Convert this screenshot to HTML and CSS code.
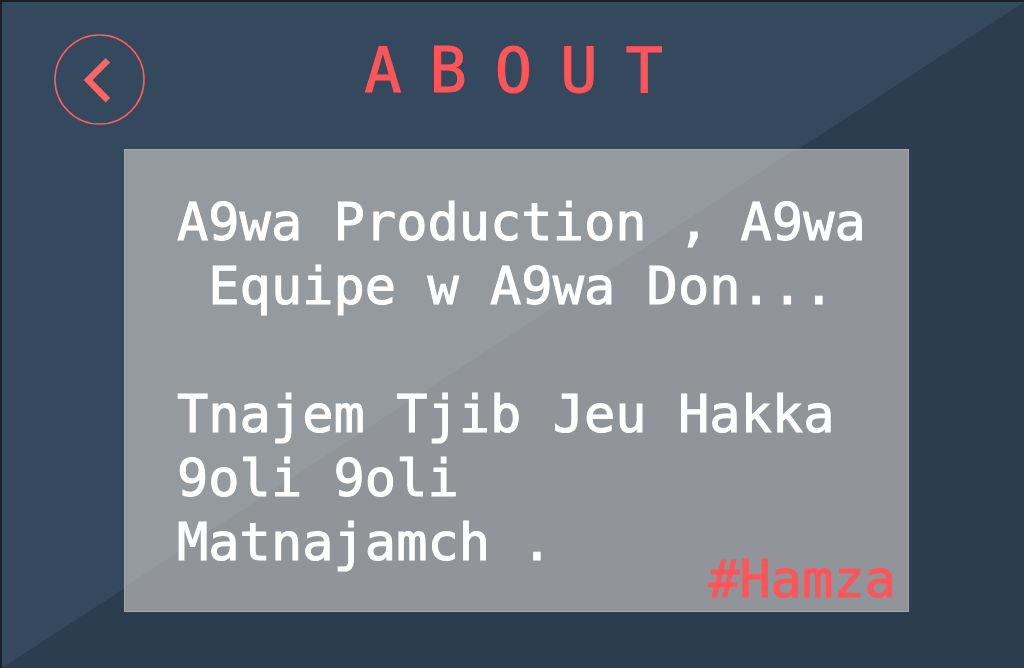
FILE: index.html
```html
<!DOCTYPE html>
<html lang="aeb-Latn">
<head>
<meta charset="utf-8">
<meta name="viewport" content="width=device-width, initial-scale=1">
<title>About</title>
<link rel="stylesheet" href="styles.css">
</head>
<body>
<div class="screen">
  <header class="header">
    <button class="back" type="button" aria-label="Back">
      <svg class="back-icon" viewBox="0 0 92 92" aria-hidden="true">
        <circle cx="46" cy="46" r="45" fill="none" stroke="#ff5c5c" stroke-width="1.6"/>
        <path d="M54.500 26.500 34.500 46.500 54.500 67" fill="none" stroke="#ff6464" stroke-width="6.500"/>
      </svg>
    </button>
    <h1 class="title">ABOUT</h1>
  </header>
  <main class="panel">
    <p class="message">A9wa Production , A9wa
 Equipe w A9wa Don...

Tnajem Tjib Jeu Hakka
9oli 9oli
Matnajamch .</p>
    <p class="tag">#Hamza</p>
  </main>
</div>
</body>
</html>
```

FILE: styles.css
```css
* {
  box-sizing: border-box;
}

body {
  margin: 0;
  font-family: "DejaVu Sans Mono", "Liberation Mono", monospace;
}

.screen {
  min-height: 100vh;
  padding: 32px 115px 40px 122px;
  border-top: 2px solid #1d1f25;
  border-left: 2px solid #1d1f25;
  background: linear-gradient(to bottom right, #35495e 50%, #2d3d50 50%);
}

.header {
  display: grid;
  grid-template-columns: 91px 1fr 91px;
  margin: 0 -64px 0 -70px;
}

.back {
  width: 91px;
  height: 91px;
  padding: 0;
  border: 0;
  border-radius: 50%;
  background: none;
  cursor: pointer;
}

.back-icon {
  display: block;
  width: 100%;
}

.title {
  margin: 0;
  padding-left: 28px;
  color: #ff5558;
  font-size: 62px;
  font-weight: 400;
  line-height: 74px;
  letter-spacing: 28px;
  text-align: center;
  -webkit-text-stroke: 1px currentColor;
}

.panel {
  display: grid;
  margin-top: 24px;
  border: 1px solid #a3a7ab;
  background: linear-gradient(to bottom right, #949a9d 50%, #919499 50%) fixed;
  font-size: 52px;
  -webkit-text-stroke: 1px currentColor;
}

.message,
.tag {
  grid-area: 1 / 1;
  margin: 0;
}

.message {
  padding: 40px 0 37px 52px;
  color: #fff;
  line-height: 64px;
  white-space: pre;
}

.tag {
  place-self: end;
  margin: 0 12px 6px 0;
  color: #ff5558;
  line-height: 52px;
}
```
